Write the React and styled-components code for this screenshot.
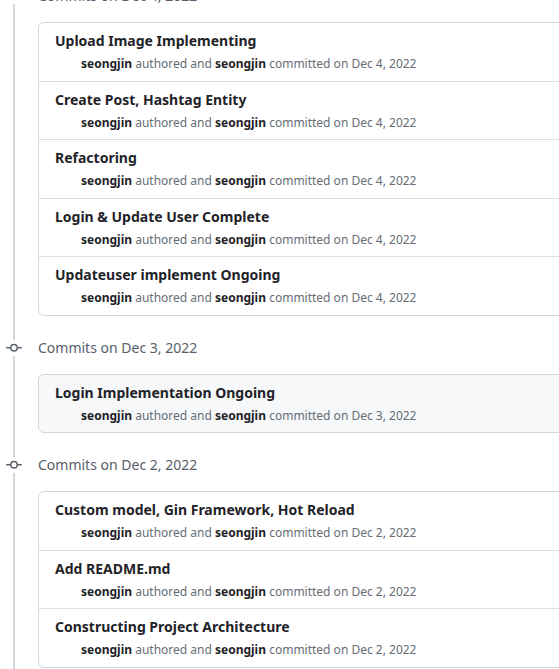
import React from "react";
import styled, { createGlobalStyle } from "styled-components";

const Global = createGlobalStyle`
  html, body { margin: 0; padding: 0; background: #ffffff; overflow: hidden; }
  body { font-family: "Noto Sans", "Liberation Sans", sans-serif; color: #24292f; }
`;

const Timeline = styled.div`
  margin-top: -36px;
  margin-left: 13px;
  width: 1000px;
  border-left: 2px solid #d0d7de;
  padding-left: 23px;
  min-height: 760px;
`;

const Section = styled.section`
  padding-top: 22px;
`;

const Header = styled.h2`
  position: relative;
  margin: 0 0 16px 0;
  height: 20px;
  display: flex;
  align-items: center;
  font-size: 14px;
  font-weight: 400;
  line-height: 20px;
  color: #57606a;
`;

const Badge = styled.span`
  position: absolute;
  left: -32px;
  top: 2px;
  width: 16px;
  height: 16px;
  background: #ffffff;
  display: flex;
  color: #57606a;
`;

const Card = styled.ul`
  list-style: none;
  margin: 0;
  padding: 0;
  border: 1px solid #d0d7de;
  border-radius: 6px;
  background: ${(p) => (p.$muted ? "#f6f8fa" : "#ffffff")};
`;

const Row = styled.li`
  padding: 8px 16px;
  border-top: 1px solid #d8dee4;
  &:first-child { border-top: none; }
`;

const Title = styled.p`
  margin: 0;
  font-size: 14px;
  font-weight: 700;
  line-height: 20px;
  color: #1f2328;
`;

const Meta = styled.p`
  margin: 4px 0 0 26px;
  font-size: 12px;
  line-height: 17.5px;
  color: #656d76;
`;

const Name = styled.b`
  font-weight: 700;
  color: #1f2328;
`;

const CommitIcon = () => (
  <svg width="16" height="16" viewBox="0 0 16 16" fill="currentColor">
    <path d="M11.93 8.5a4.002 4.002 0 0 1-7.86 0H.75a.75.75 0 0 1 0-1.5h3.32a4.002 4.002 0 0 1 7.86 0h3.32a.75.75 0 0 1 0 1.5Zm-1.43-.75a2.5 2.5 0 1 0-5 0 2.5 2.5 0 0 0 5 0Z" />
  </svg>
);

const groups = [
  {
    date: "Dec 4, 2022",
    commits: [
      "Upload Image Implementing",
      "Create Post, Hashtag Entity",
      "Refactoring",
      "Login & Update User Complete",
      "Updateuser implement Ongoing",
    ],
  },
  { date: "Dec 3, 2022", muted: true, commits: ["Login Implementation Ongoing"] },
  {
    date: "Dec 2, 2022",
    commits: [
      "Custom model, Gin Framework, Hot Reload",
      "Add README.md",
      "Constructing Project Architecture",
    ],
  },
];

export default function App() {
  return (
    <>
      <Global />
      <Timeline>
        {groups.map((g) => (
          <Section key={g.date}>
            <Header>
              <Badge>
                <CommitIcon />
              </Badge>
              Commits on {g.date}
            </Header>
            <Card $muted={g.muted}>
              {g.commits.map((c) => (
                <Row key={c}>
                  <Title>{c}</Title>
                  <Meta>
                    <Name>seongjin</Name> authored and <Name>seongjin</Name> committed on {g.date}
                  </Meta>
                </Row>
              ))}
            </Card>
          </Section>
        ))}
      </Timeline>
    </>
  );
}
